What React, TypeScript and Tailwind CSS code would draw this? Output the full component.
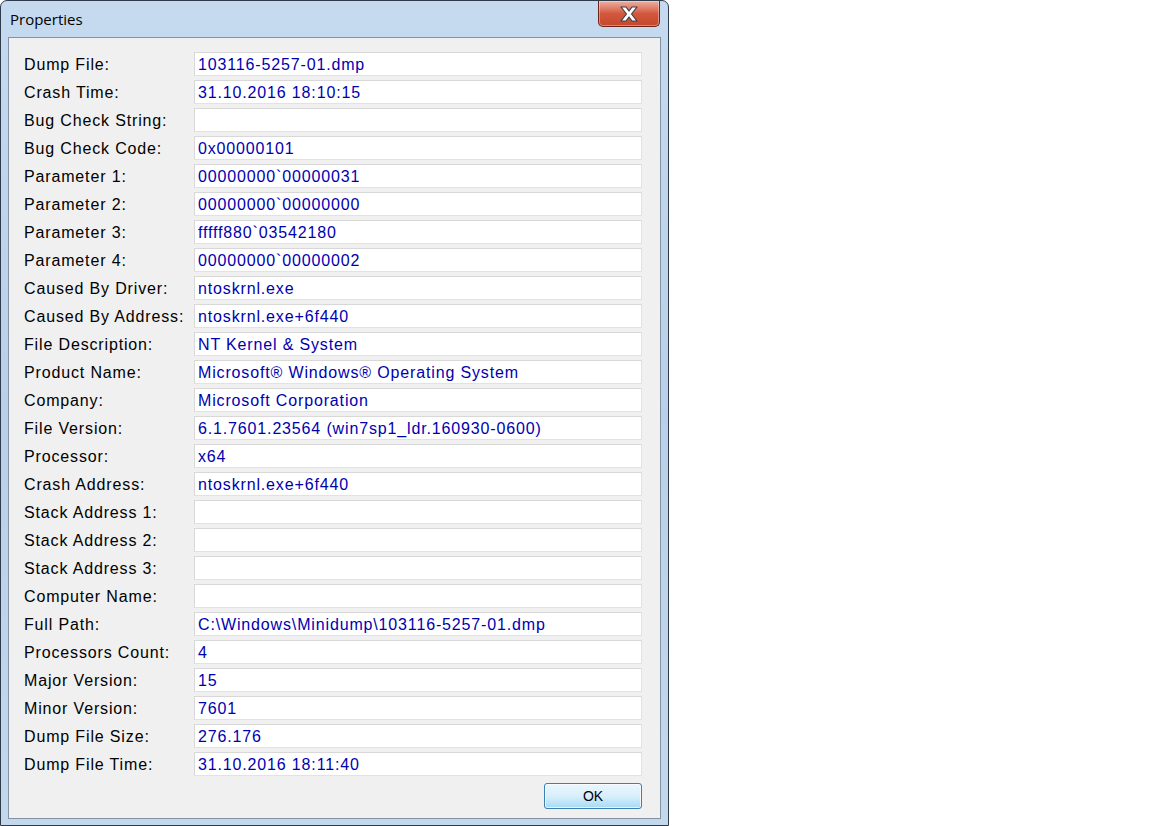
import React from 'react';

const rows: [string, string][] = [
  ['Dump File:', '103116-5257-01.dmp'],
  ['Crash Time:', '31.10.2016 18:10:15'],
  ['Bug Check String:', ''],
  ['Bug Check Code:', '0x00000101'],
  ['Parameter 1:', '00000000`00000031'],
  ['Parameter 2:', '00000000`00000000'],
  ['Parameter 3:', 'fffff880`03542180'],
  ['Parameter 4:', '00000000`00000002'],
  ['Caused By Driver:', 'ntoskrnl.exe'],
  ['Caused By Address:', 'ntoskrnl.exe+6f440'],
  ['File Description:', 'NT Kernel & System'],
  ['Product Name:', 'Microsoft® Windows® Operating System'],
  ['Company:', 'Microsoft Corporation'],
  ['File Version:', '6.1.7601.23564 (win7sp1_ldr.160930-0600)'],
  ['Processor:', 'x64'],
  ['Crash Address:', 'ntoskrnl.exe+6f440'],
  ['Stack Address 1:', ''],
  ['Stack Address 2:', ''],
  ['Stack Address 3:', ''],
  ['Computer Name:', ''],
  ['Full Path:', 'C:\\Windows\\Minidump\\103116-5257-01.dmp'],
  ['Processors Count:', '4'],
  ['Major Version:', '15'],
  ['Minor Version:', '7601'],
  ['Dump File Size:', '276.176'],
  ['Dump File Time:', '31.10.2016 18:11:40'],
];

const CloseButton = () => (
  <div className="absolute right-[8px] top-0 w-[62px] h-[26px] rounded-b-[5px] border border-t-0 border-[#6e2418] bg-gradient-to-b from-[#eab0a2] via-[#d4583e] to-[#c4472c] flex items-center justify-center shadow-[inset_0_0_0_1px_rgba(255,255,255,0.35)]">
    <svg width="22" height="18" viewBox="0 0 22 18">
      <path
        d="M3 2 H8 L11 6 L14 2 H19 L13.5 9 L19 16 H14 L11 12 L8 16 H3 L8.5 9 Z"
        fill="#ffffff"
        stroke="#3b3f4a"
        strokeWidth="1.2"
        strokeLinejoin="round"
      />
    </svg>
  </div>
);

export default function App() {
  return (
    <div className="w-[1152px] h-[826px] bg-white">
      <div className="relative w-[669px] h-[826px] rounded-t-[7px] border border-[#2d3b4c] bg-gradient-to-b from-[#c6daef] via-[#b9d0e8] to-[#c4d8ec] flex flex-col">
        {/* title bar */}
        <div className="h-[36px] flex items-center pl-[9px] pt-[1px]">
          <span className="text-[15px] text-black" style={{ fontFamily: '"Open Sans", "DejaVu Sans", sans-serif' }}>
            Properties
          </span>
        </div>
        <CloseButton />

        {/* client area */}
        <div
          className="mx-[7px] mb-[6px] flex-1 border border-[#8393a5] bg-[#f0f0f0] pl-[15px] pr-[18px] pt-[14px]"
          style={{ fontFamily: '"Liberation Sans", Arial, sans-serif' }}
        >
          <div className="flex flex-col gap-[4px]">
            {rows.map(([label, value]) => (
              <div key={label} className="flex items-center h-[24px]">
                <div className="w-[170px] pt-[2px] text-[16px] tracking-[0.85px] text-black leading-none">{label}</div>
                <div className="flex-1 h-[24px] bg-white border border-[#e2e2e2] border-t-[#d8d8d8] border-l-[#d8d8d8] flex items-center pl-[3px] pt-[2px] text-[16px] tracking-[0.85px] text-[#0000b0] leading-none whitespace-nowrap overflow-hidden">
                  {value}
                </div>
              </div>
            ))}
          </div>
          <div className="flex justify-end mt-[7px]">
            <button className="w-[98px] h-[26px] rounded-[3px] border border-[#3c7fb1] bg-gradient-to-b from-[#eaf6fd] via-[#d9f0fc] to-[#a7d9f5] text-[14px] text-black shadow-[inset_0_0_0_1px_rgba(255,255,255,0.7)]">
              OK
            </button>
          </div>
        </div>
      </div>
    </div>
  );
}
